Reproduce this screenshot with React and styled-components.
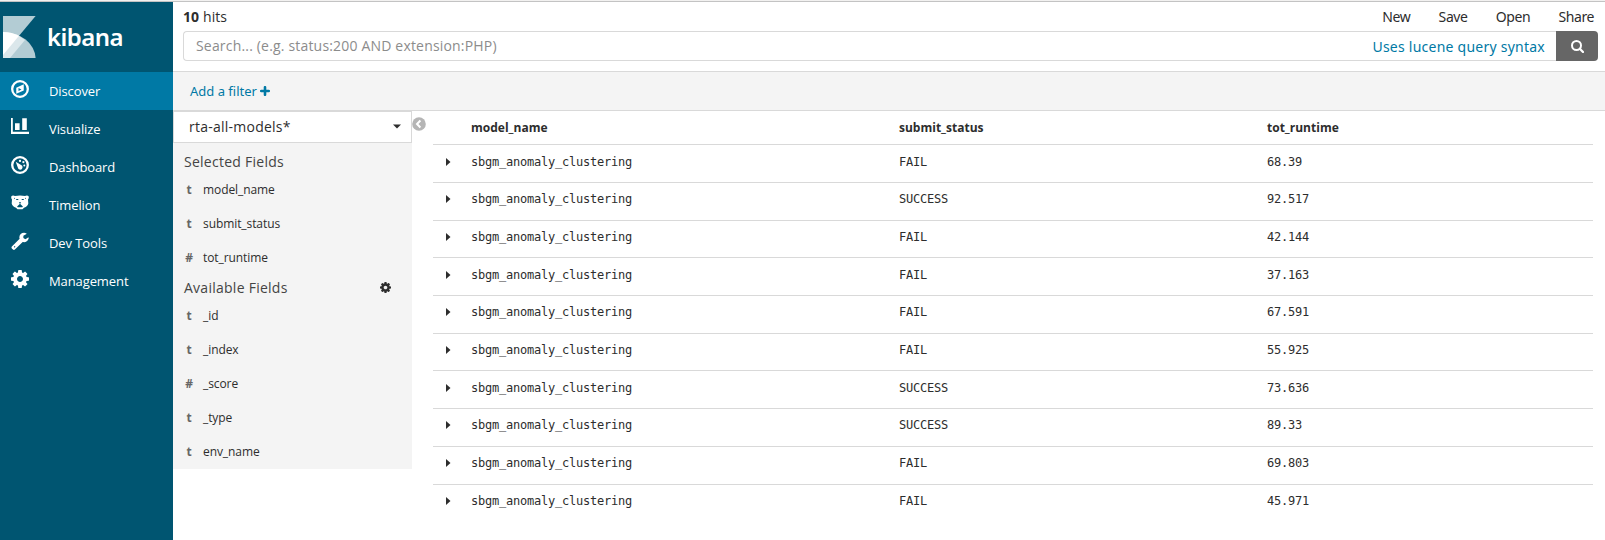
import React from "react";
import styled, { createGlobalStyle } from "styled-components";

const sans = '"Open Sans", "Noto Sans", sans-serif';
const noto = '"Noto Sans", "Open Sans", sans-serif';
const line = "#d9d9d9";

const Global = createGlobalStyle`
  * { box-sizing: border-box; }
  body { margin: 0; background: #fff; color: #2d2d2d; font-family: ${sans}; font-size: 14px; }
`;

const TopEdge = styled.div`
  height: 2px;
  background: #f2f1f0;
  border-bottom: 1px solid #c3c3c3;
`;

const Page = styled.div`
  display: flex;
  height: 538px;
  overflow: hidden;
`;

const Nav = styled.nav`
  width: 173px;
  flex: none;
  background: #005571;
  color: #fff;
`;

const Brand = styled.div`
  height: 70px;
  display: flex;
  align-items: flex-start;
  padding: 14px 0 0 3px;
  svg { flex: none; }
`;

const BrandName = styled.span`
  margin: 1px 0 0 11px;
  font: 600 24px/40px ${noto};
  letter-spacing: -0.55px;
`;

const NavItem = styled.a`
  display: flex;
  align-items: flex-start;
  height: 38px;
  padding: 8px 0 0 11px;
  background: ${(p) => (p.$active ? "#0079a5" : "transparent")};
  svg { flex: none; width: 18px; height: 18px; }
  span { margin-left: 20px; font-size: 13px; line-height: 23px; letter-spacing: -0.1px; }
`;

const Main = styled.main`
  flex: 1;
  min-width: 0;
`;

const QueryArea = styled.header`
  height: 70px;
  padding: 5px 7px 0 10px;
  border-bottom: 1px solid ${line};
`;

const TopLine = styled.div`
  display: flex;
  justify-content: space-between;
  height: 24px;
  line-height: 20px;
  letter-spacing: 0.1px;
`;

const Menu = styled.div`
  display: flex;
  gap: 28.3px;
  padding-right: 4px;
  font-family: ${noto};
  letter-spacing: -0.42px;
`;

const SearchBar = styled.div`
  display: flex;
  height: 30px;
`;

const SearchField = styled.div`
  flex: 1;
  display: flex;
  justify-content: space-between;
  padding: 0 11px 0 12px;
  border: 1px solid ${line};
  border-right: 0;
  border-radius: 4px 0 0 4px;
  line-height: 28px;
  letter-spacing: 0.18px;
  color: #8c8c8c;
`;

const SyntaxLink = styled.a`
  color: #0079a5;
  font-family: ${noto};
  line-height: 30px;
  letter-spacing: 0.24px;
`;

const SearchButton = styled.button`
  display: flex;
  align-items: center;
  justify-content: center;
  width: 42px;
  padding: 0;
  border: 0;
  border-radius: 0 4px 4px 0;
  background: #666;
  color: #fff;
`;

const FilterBar = styled.div`
  display: flex;
  align-items: center;
  gap: 3px;
  height: 39px;
  padding-left: 17px;
  border-bottom: 1px solid ${line};
  background: #f4f4f4;
  color: #0079a5;
  font: 13px ${noto};
`;

const Body = styled.div`
  display: flex;
`;

const Fields = styled.aside`
  width: 239px;
  height: 358px;
  flex: none;
  background: #f4f4f4;
`;

const IndexSelect = styled.div`
  display: flex;
  align-items: center;
  justify-content: space-between;
  height: 32px;
  padding: 0 10px 1px 15px;
  border: 1px solid ${line};
  background: #fff;
  letter-spacing: 0.24px;
`;

const FieldHeading = styled.div`
  display: flex;
  align-items: center;
  justify-content: space-between;
  height: ${(p) => p.$height}px;
  padding: ${(p) => p.$top}px 21px 0 11px;
  color: #444;
  letter-spacing: 0.26px;
`;

const Field = styled.div`
  display: flex;
  height: 34px;
  padding-left: 11px;
  font-size: 12px;
  line-height: 33px;
  letter-spacing: -0.08px;
  b { width: 10px; margin-right: 9px; text-align: center; color: #666; }
`;

const Collapse = styled.div`
  width: 21px;
  padding-top: 6px;
  line-height: 0;
`;

const Table = styled.div`
  flex: 1;
  margin-right: 12px;
`;

const Row = styled.div`
  display: grid;
  grid-template-columns: 38px 428px 368px 1fr;
  align-items: center;
  height: 37.71px;
  border-top: 1px solid ${line};
  font: 12px "DejaVu Sans Mono", monospace;
  letter-spacing: -0.22px;
  padding-bottom: 4px;
  svg { margin-left: 13px; }
`;

const HeadRow = styled(Row)`
  height: 33.2px;
  border-top: 0;
  padding-bottom: 0;
  font: 700 12px ${sans};
  letter-spacing: 0;
`;

const Logo = () => (
  <svg width="33" height="42" viewBox="0 0 33 42">
    <path d="M0 0H32.6L0 39Z" fill="#b3ccd4" />
    <path d="M0 16A32.6 27 0 0 1 32.6 42H0Z" fill="#b3ccd4" />
    <path d="M0 16Q9 16 16 20L22 24L7 42H0Z" fill="#dbe7eb" />
    <path d="M0 16Q9 16 16 19.8L0 39Z" fill="#fff" />
  </svg>
);

const Compass = () => (
  <svg viewBox="0 0 1536 1536">
    <circle cx="768" cy="768" r="668" fill="none" stroke="#fff" strokeWidth="195" />
    <path fillRule="evenodd" fill="#fff" d="M640 942l256-128-256-128v256zm448-574v522l-640 286v-522z" />
  </svg>
);

const Bars = () => (
  <svg viewBox="0 0 18 18">
    <path fill="#fff" d="M0 0H1.8V13.8H18V16H0ZM4 5.3H8.6V12H4ZM11.2 0.2H15.8V12H11.2Z" />
  </svg>
);

const Gauge = () => (
  <svg viewBox="0 0 18 18">
    <circle cx="9" cy="9" r="7.8" fill="none" stroke="#fff" strokeWidth="2.3" />
    <g fill="#fff">
      <path d="M4.7 5.8L10.1 9.1A2.4 2.4 0 1 1 6.8 11.6Z" />
      <circle cx="9" cy="4.9" r="1.15" />
      <circle cx="12.4" cy="6.1" r="1.15" />
      <circle cx="13.3" cy="9.5" r="1" />
    </g>
  </svg>
);

const Bear = () => (
  <svg viewBox="0 0 18 18">
    <path fill="#fff" d="M0.4 2.3Q1.5 0.8 4 1.9Q9 1.2 14 1.9Q16.5 0.8 17.6 2.3Q18.2 4 17 5.5L17.3 9.5Q16.8 12.2 13 13.8L11.5 15.2H6.5L5 13.8Q1.2 12.2 0.7 9.5L1 5.5Q-0.2 4 0.4 2.3Z" />
    <g fill="#005571">
      <path d="M5.2 5.1H7.3V6H5.2ZM10.7 5.1H12.8V6H10.7ZM7.9 8.3H10.1L9.6 9.5H8.4ZM9 9.8L11.9 12.4L11.3 13.2H6.7L6.1 12.4Z" />
      <circle cx="3.5" cy="4.3" r=".5" />
      <circle cx="14.5" cy="4.3" r=".5" />
    </g>
  </svg>
);

const Wrench = () => (
  <svg viewBox="64 60 1664 1712">
    <path fill="#fff" d="M448 1472q0-26-19-45t-45-19-45 19-19 45 19 45 45 19 45-19 19-45zM1152 1000l-742 734q-37 37-90 37-52 0-91-37l-106-108q-38-36-38-90 0-53 38-91l741-741q39 98 114.500 173.500t173.500 122.500zM1726 617q0 39-23 106-47 134-164.500 217.500t-258.500 83.500q-185 0-316.500-131.500t-131.500-316.500 131.500-316.500 316.500-131.500q58 0 121.500 16.500t107.500 46.500q16 11 16 28t-16 28l-293 169v224l193 107q5-3 79-48.500t135.500-81 70.500-35.500q15 0 23.500 10t8.500 25z" />
  </svg>
);

const Cog = ({ size = 18, color = "#fff" }) => (
  <svg width={size} height={size} viewBox="128 128 1536 1536">
    <path fill={color} d="M1152 896q0-106-75-181t-181-75-181 75-75 181 75 181 181 75 181-75 75-181zm512-109v222q0 12-8 23t-20 13l-185 28q-19 54-39 91 35 50 107 138 10 12 10 25t-9 23q-27 37-99 108t-94 71q-12 0-26-9l-138-108q-44 23-91 38-16 136-29 186-7 28-36 28h-222q-14 0-24.5-8.5t-11.5-21.5l-28-184q-49-16-90-37l-141 107q-10 9-25 9-14 0-25-11-126-114-165-168-7-10-7-23 0-12 8-23 15-21 51-66.5t54-70.5q-27-50-41-99l-183-27q-13-2-21-12.5t-8-23.5v-222q0-12 8-23t19-13l186-28q14-46 39-92-40-57-107-138-10-12-10-24 0-10 9-23 26-36 98.5-107.5t94.5-71.5q13 0 26 10l138 107q44-23 91-38 16-136 29-186 7-28 36-28h222q14 0 24.5 8.5t11.5 21.5l28 184q49 16 90 37l142-107q9-9 24-9 13 0 25 10 129 119 165 170 7 8 7 22 0 12-8 23-15 21-51 66.5t-54 70.5q26 50 41 98l183 28q13 2 21 12.5t8 23.5z" />
  </svg>
);

const nav = [
  ["Discover", Compass],
  ["Visualize", Bars],
  ["Dashboard", Gauge],
  ["Timelion", Bear],
  ["Dev Tools", Wrench],
  ["Management", Cog],
];

const selected = [["t", "model_name"], ["t", "submit_status"], ["#", "tot_runtime"]];
const available = [["t", "_id"], ["t", "_index"], ["#", "_score"], ["t", "_type"], ["t", "env_name"]];

const hits = [
  ["FAIL", "68.39"],
  ["SUCCESS", "92.517"],
  ["FAIL", "42.144"],
  ["FAIL", "37.163"],
  ["FAIL", "67.591"],
  ["FAIL", "55.925"],
  ["SUCCESS", "73.636"],
  ["SUCCESS", "89.33"],
  ["FAIL", "69.803"],
  ["FAIL", "45.971"],
];

const FieldList = ({ items }) =>
  items.map(([type, name]) => (
    <Field key={name}><b>{type}</b><span>{name}</span></Field>
  ));

export default function App() {
  return (
    <>
      <Global />
      <TopEdge />
      <Page>
        <Nav>
          <Brand><Logo /><BrandName>kibana</BrandName></Brand>
          {nav.map(([label, Icon], i) => (
            <NavItem key={label} $active={i === 0}><Icon /><span>{label}</span></NavItem>
          ))}
        </Nav>
        <Main>
          <QueryArea>
            <TopLine>
              <span><b>10</b> hits</span>
              <Menu><span>New</span><span>Save</span><span>Open</span><span>Share</span></Menu>
            </TopLine>
            <SearchBar>
              <SearchField>
                <span>Search... (e.g. status:200 AND extension:PHP)</span>
                <SyntaxLink>Uses lucene query syntax</SyntaxLink>
              </SearchField>
              <SearchButton aria-label="Search">
                <svg width="13" height="13" viewBox="0 0 13 13" fill="none" stroke="currentColor">
                  <circle cx="5.5" cy="5.5" r="4.5" strokeWidth="2" />
                  <path d="M8.8 8.8L12 12" strokeWidth="2.3" strokeLinecap="round" />
                </svg>
              </SearchButton>
            </SearchBar>
          </QueryArea>
          <FilterBar>
            <span>Add a filter</span>
            <svg width="10" height="10" viewBox="0 0 10 10"><path d="M5 1.2V8.8M1.2 5H8.8" stroke="currentColor" strokeWidth="2.6" strokeLinecap="round" /></svg>
          </FilterBar>
          <Body>
            <Fields>
              <IndexSelect>
                <span>rta-all-models*</span>
                <svg width="8" height="5" viewBox="0 0 8 5"><path d="M0 .5H8L4 4.5Z" fill="#2d2d2d" /></svg>
              </IndexSelect>
              <FieldHeading $height={30} $top={6}><span>Selected Fields</span></FieldHeading>
              <FieldList items={selected} />
              <FieldHeading $height={24} $top={0}><span>Available Fields</span><Cog size={11} color="#2d2d2d" /></FieldHeading>
              <FieldList items={available} />
            </Fields>
            <Collapse>
              <svg width="14" height="14" viewBox="0 0 14 14">
                <circle cx="7" cy="7" r="6.8" fill="#b5b5b5" />
                <path d="M8.4 3.5L5 7L8.4 10.5" fill="none" stroke="#fff" strokeWidth="2" />
              </svg>
            </Collapse>
            <Table>
              <HeadRow><span /><span>model_name</span><span>submit_status</span><span>tot_runtime</span></HeadRow>
              {hits.map(([status, runtime]) => (
                <Row key={runtime}>
                  <svg width="5" height="8" viewBox="0 0 5 8"><path d="M0 0L4.5 4L0 8Z" fill="#2d2d2d" /></svg>
                  <span>sbgm_anomaly_clustering</span>
                  <span>{status}</span>
                  <span>{runtime}</span>
                </Row>
              ))}
            </Table>
          </Body>
        </Main>
      </Page>
    </>
  );
}
